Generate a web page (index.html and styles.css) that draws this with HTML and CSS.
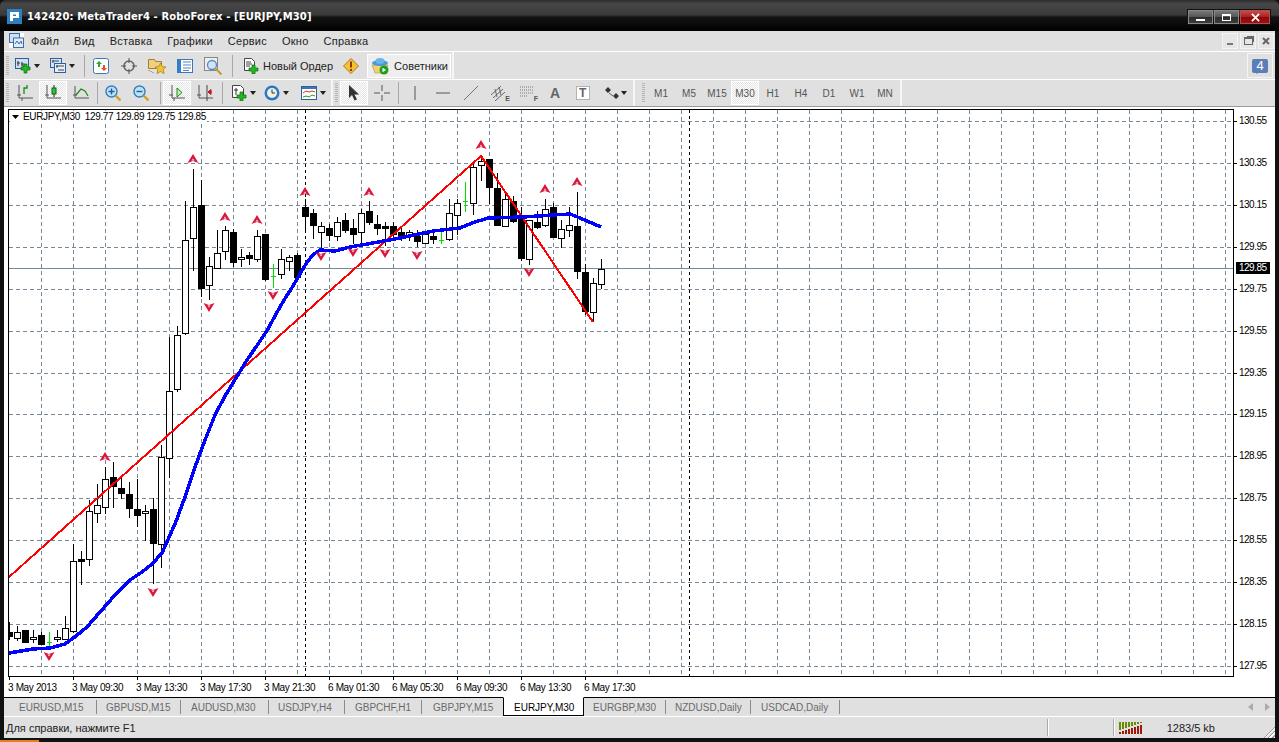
FILE: index.html
```html
<!DOCTYPE html>
<html lang="ru">
<head>
<meta charset="utf-8">
<title>MetaTrader4</title>
<link rel="stylesheet" href="styles.css">
</head>
<body>
<svg class="defs" width="0" height="0">
<defs>
<symbol id="i-chart" viewBox="0 0 16 16"><rect x=".5" y=".5" width="13" height="10" fill="#cfe0f5" stroke="#2b5f9e"/><path d="M3 3v5M2 5h3M7 4v4h4M6 6h3" stroke="#333" fill="none"/><path d="M9 6h3v3h3v3h-3v3H9v-3H6V9h3z" fill="#22b822" stroke="#0d6a0d" stroke-width=".7"/></symbol>
<symbol id="i-prof" viewBox="0 0 16 16"><rect x=".5" y=".5" width="11" height="9" fill="#d6e4f6" stroke="#2b5f9e"/><rect x="4.500" y="5.500" width="11" height="9" fill="#e6eefa" stroke="#2b5f9e"/><path d="M2 3h7M3 2v3M6 8h8M7 7v3M8 12h6" stroke="#444" fill="none"/></symbol>
<symbol id="i-watch" viewBox="0 0 16 16"><rect x=".5" y=".5" width="15" height="15" rx="2" fill="#fff" stroke="#3b78b8"/><path d="M5 9V6H3l3-3 3 3H7v3z" fill="#2aaa2a"/><path d="M10 7v3h2l-3 3-3-3h2V7z" fill="#e2502a" transform="translate(2 0)"/></symbol>
<symbol id="i-cross" viewBox="0 0 16 16"><circle cx="8" cy="8" r="5" fill="none" stroke="#666" stroke-width="1.600"/><path d="M8 0v5M8 11v5M0 8h5M11 8h5" stroke="#555"/></symbol>
<symbol id="i-star" viewBox="0 0 18 18"><path d="M.5 2.500h6l1 2h6v7H.5z" fill="#f0d080" stroke="#a08030"/><path d="M1 13v1M3 14v1M5 15v1" stroke="#777"/><path d="M12.500 6l1.700 3.600 3.800.4-2.800 2.600.8 4-3.500-2.100L9 16.600l.8-4L7 10l3.800-.4z" fill="#f2c530" stroke="#a07818" stroke-width=".7"/></symbol>
<symbol id="i-list" viewBox="0 0 16 16"><rect x=".5" y="1.500" width="15" height="13" fill="#fff" stroke="#3b78b8"/><rect x="1" y="2" width="3" height="12" fill="#2f80d0"/><path d="M6 4h8M6 7h8M6 10h8M6 12.500h6" stroke="#5585bb"/></symbol>
<symbol id="i-test" viewBox="0 0 18 18"><rect x=".5" y=".5" width="13" height="13" fill="#eee" stroke="#888"/><circle cx="8" cy="8" r="4.500" fill="#cfe4f8" stroke="#5b88b8" stroke-width="1.300"/><path d="M11.500 11.500l6 6" stroke="#c89a30" stroke-width="2"/></symbol>
<symbol id="i-order" viewBox="0 0 16 16"><path d="M1.500.5h7l3 3v9h-10z" fill="#fff" stroke="#444"/><path d="M3 4h5M3 6h6M3 8h4" stroke="#444"/><path d="M9 7h3v3h3v3h-3v3H9v-3H6v-3h3z" fill="#22b822" stroke="#0d6a0d" stroke-width=".7"/></symbol>
<symbol id="i-warn" viewBox="0 0 16 16"><path d="M8 .5l7.500 7.500L8 15.500.5 8z" fill="#f6c030" stroke="#a87a20"/><path d="M8 3.500v6M8 11v2" stroke="#8a3a10" stroke-width="2"/></symbol>
<symbol id="i-ea" viewBox="0 0 18 18"><path d="M1 8l3 8h10l3-8z" fill="#f0d070" stroke="#b09040" stroke-width=".6"/><ellipse cx="9" cy="6" rx="8" ry="3" fill="#4a9ad8"/><ellipse cx="9" cy="4" rx="4.500" ry="3" fill="#6ab4e8"/><circle cx="13" cy="13" r="4.500" fill="#1ea01e"/><path d="M11.500 10.800v4.400l3.600-2.200z" fill="#fff"/></symbol>
<symbol id="i-bar" viewBox="0 0 16 16"><path d="M2 0v13h14" fill="none" stroke="#555"/><path d="M0 10h4M5 16v-3" stroke="#555"/><path d="M7 9V3h3V0" fill="none" stroke="#1a8a1a" stroke-width="1.300"/></symbol>
<symbol id="i-cand" viewBox="0 0 16 16"><path d="M2 0v13h14" fill="none" stroke="#555"/><path d="M0 10h4" stroke="#555"/><path d="M9 0v12" stroke="#222"/><rect x="7" y="3" width="4" height="6" fill="#2fc82f" stroke="#126012"/></symbol>
<symbol id="i-line" viewBox="0 0 16 16"><path d="M2 1v12h14" fill="none" stroke="#555"/><path d="M0 10h4" stroke="#555"/><path d="M3 10l5-6 4 2 3 5" fill="none" stroke="#1a8a1a" stroke-width="1.200"/></symbol>
<symbol id="i-zin" viewBox="0 0 16 16"><circle cx="6.500" cy="6.500" r="5.500" fill="#bfe0f6" stroke="#2f80c0" stroke-width="1.400"/><path d="M3.500 6.500h6M6.500 3.500v6" stroke="#2060a0" stroke-width="1.400"/><path d="M10.500 10.500l5 5" stroke="#d0a030" stroke-width="2.400"/></symbol>
<symbol id="i-zout" viewBox="0 0 16 16"><circle cx="6.500" cy="6.500" r="5.500" fill="#bfe0f6" stroke="#2f80c0" stroke-width="1.400"/><path d="M3.500 6.500h6" stroke="#2060a0" stroke-width="1.400"/><path d="M10.500 10.500l5 5" stroke="#d0a030" stroke-width="2.400"/></symbol>
<symbol id="i-auto" viewBox="0 0 16 16"><path d="M3 0v13h13" fill="none" stroke="#555"/><path d="M0 10h4M5 16v-3" stroke="#555"/><path d="M8 3l5 4.500-5 4.500z" fill="#bff0b8" stroke="#1a8a1a"/></symbol>
<symbol id="i-shift" viewBox="0 0 16 16"><path d="M2 0v13h14" fill="none" stroke="#555"/><path d="M0 10h4" stroke="#555"/><path d="M10 0v16" stroke="#444"/><path d="M15 7H11M11 7l3-2.500v5z" fill="#c01818" stroke="#c01818"/></symbol>
<symbol id="i-ind" viewBox="0 0 16 16"><path d="M1.500.5h8l3 3v9h-11z" fill="#fff" stroke="#444"/><path d="M5 3v7M3 5h4" stroke="#333"/><path d="M9 7h3v3h3v3h-3v3H9v-3H6v-3h3z" fill="#22b822" stroke="#0d6a0d" stroke-width=".7"/></symbol>
<symbol id="i-clock" viewBox="0 0 16 16"><circle cx="8" cy="8" r="7.500" fill="#2a78c8"/><circle cx="8" cy="8" r="5" fill="#f4f0e0"/><path d="M8 4.500V8h3" fill="none" stroke="#333"/></symbol>
<symbol id="i-tmpl" viewBox="0 0 16 16"><rect x=".5" y="1.500" width="15" height="13" fill="#fff" stroke="#2b5f9e"/><rect x="1" y="2" width="14" height="2" fill="#3b78b8"/><path d="M2 8l3-2 3 1 3-1 3 1" fill="none" stroke="#d03a20"/><path d="M2 12l3-1 3 1 3-2 3 1" fill="none" stroke="#2a9a2a"/></symbol>
<symbol id="i-arrow" viewBox="0 0 16 16"><path d="M3 0v13l3-3 2.500 5.500 2.500-1L8.500 9.500H13z" fill="#333"/></symbol>
<symbol id="i-hair" viewBox="0 0 16 16"><path d="M8 0v6M8 10v6M0 8h6M10 8h6" stroke="#555"/></symbol>
<symbol id="i-vl" viewBox="0 0 16 16"><path d="M8 1v14" stroke="#555"/></symbol>
<symbol id="i-hl" viewBox="0 0 16 16"><path d="M1 8h14" stroke="#555"/></symbol>
<symbol id="i-tl" viewBox="0 0 16 16"><path d="M1 15L15 1" stroke="#777"/></symbol>
<symbol id="i-chan" viewBox="0 0 16 16"><path d="M0 10L10 1M2 13L12 4M4 16L14 7M4 4l2 8M8 2l2 8" stroke="#666" fill="none"/></symbol>
<symbol id="i-fib" viewBox="0 0 16 16"><path d="M1 2h13M1 5h13M1 8h13M1 11h8" stroke="#777" stroke-dasharray="1 1"/></symbol>
<symbol id="i-lab" viewBox="0 0 16 16"><rect x="1.500" y="1.500" width="13" height="13" fill="#fff" stroke="#777" stroke-dasharray="1 1"/></symbol>
<symbol id="i-more" viewBox="0 0 16 16"><path d="M1 5l3-3 3 3-3 3zM9 11l3-3 3 3-3 3z" fill="#333"/><path d="M5 8l4 3" stroke="#555"/></symbol>
<symbol id="i-logo" viewBox="0 0 15 15"><rect width="15" height="15" fill="#2f7fc0"/><path d="M3 3h9v6H6v3H3zM6 5.500v1.500h3V5.500z" fill="#fff"/></symbol>
<symbol id="i-doc" viewBox="0 0 15 15"><rect x=".5" y=".5" width="10" height="9" fill="#cfe0f5" stroke="#3b6ea8"/><rect x="4.500" y="5" width="10" height="9.500" fill="#e3edf9" stroke="#3b6ea8"/><path d="M6 11l2-3 2 3 2-3 1 3" fill="none" stroke="#3b6ea8"/></symbol>
</defs>
</svg>

<div class="window">
  <header class="titlebar">
    <svg class="logo"><use href="#i-logo"/></svg>
    <span class="title">142420: MetaTrader4 - RoboForex - [EURJPY,M30]</span>
    <div class="winbtns">
      <span class="wb"><i class="wb-min"></i></span>
      <span class="wb"><i class="wb-max"></i></span>
      <span class="wb wb-close"><svg class="wb-x" viewBox="0 0 10 10"><path d="M1 1l8 8M9 1l-8 8"/></svg></span>
    </div>
  </header>

  <div class="frame">
    <nav class="menu">
      <svg class="docicon"><use href="#i-doc"/></svg>
      <span class="mi">Файл</span><span class="mi">Вид</span><span class="mi">Вставка</span><span class="mi">Графики</span><span class="mi">Сервис</span><span class="mi">Окно</span><span class="mi">Справка</span>
      <div class="mdi">
        <span class="mdib"><i class="mdi-min"></i></span>
        <span class="mdib"><i class="mdi-max"></i></span>
        <span class="mdib"><svg class="mdi-x" viewBox="0 0 8 8"><path d="M1 1l6 6M7 1L1 7"/></svg></span>
      </div>
    </nav>

    <div class="tb tb1">
      <i class="grip"></i>
      <span class="btn drop"><svg class="ic"><use href="#i-chart"/></svg><i class="caret"></i></span>
      <span class="btn drop"><svg class="ic"><use href="#i-prof"/></svg><i class="caret"></i></span>
      <i class="sep sep3"></i>
      <span class="btn"><svg class="ic"><use href="#i-watch"/></svg></span>
      <span class="btn"><svg class="ic"><use href="#i-cross"/></svg></span>
      <span class="btn"><svg class="ic ic18"><use href="#i-star"/></svg></span>
      <span class="btn"><svg class="ic"><use href="#i-list"/></svg></span>
      <span class="btn"><svg class="ic ic18"><use href="#i-test"/></svg></span>
      <i class="sep sep5"></i>
      <span class="btn txt order"><svg class="ic"><use href="#i-order"/></svg>Новый Ордер</span>
      <span class="btn warn"><svg class="ic"><use href="#i-warn"/></svg></span>
      <span class="btn txt pressed ea"><svg class="ic ic18"><use href="#i-ea"/></svg>Советники</span>
      <i class="edge"></i>
      <span class="alert"><span class="bubble">4</span></span>
    </div>

    <div class="tb tb2">
      <i class="grip"></i>
      <span class="btn"><svg class="ic"><use href="#i-bar"/></svg></span>
      <span class="btn pressed"><svg class="ic"><use href="#i-cand"/></svg></span>
      <span class="btn"><svg class="ic"><use href="#i-line"/></svg></span>
      <i class="sep"></i>
      <span class="btn"><svg class="ic"><use href="#i-zin"/></svg></span>
      <span class="btn"><svg class="ic"><use href="#i-zout"/></svg></span>
      <i class="sep sep5"></i>
      <span class="btn pressed"><svg class="ic"><use href="#i-auto"/></svg></span>
      <span class="btn"><svg class="ic"><use href="#i-shift"/></svg></span>
      <i class="sep sep3"></i>
      <span class="btn drop drop6"><svg class="ic"><use href="#i-ind"/></svg><i class="caret"></i></span>
      <span class="btn drop"><svg class="ic"><use href="#i-clock"/></svg><i class="caret"></i></span>
      <span class="btn drop drop6"><svg class="ic"><use href="#i-tmpl"/></svg><i class="caret"></i></span>
      <i class="edge"></i>
      <i class="grip grip-b"></i>
      <span class="btn pressed"><svg class="ic"><use href="#i-arrow"/></svg></span>
      <span class="btn"><svg class="ic"><use href="#i-hair"/></svg></span>
      <i class="sep sep2"></i>
      <span class="btn"><svg class="ic"><use href="#i-vl"/></svg></span>
      <span class="btn"><svg class="ic"><use href="#i-hl"/></svg></span>
      <span class="btn"><svg class="ic"><use href="#i-tl"/></svg></span>
      <span class="btn lab"><svg class="ic"><use href="#i-chan"/></svg><b class="sub">E</b></span>
      <span class="btn lab"><svg class="ic"><use href="#i-fib"/></svg><b class="sub">F</b></span>
      <span class="btn big">A</span>
      <span class="btn lab"><svg class="ic"><use href="#i-lab"/></svg><b class="tee">T</b></span>
      <span class="btn drop drop7"><svg class="ic"><use href="#i-more"/></svg><i class="caret"></i></span>
      <i class="edge"></i>
      <i class="grip grip-c"></i>
      <span class="btn tf">M1</span><span class="btn tf">M5</span><span class="btn tf">M15</span><span class="btn tf pressed">M30</span><span class="btn tf">H1</span><span class="btn tf">H4</span><span class="btn tf">D1</span><span class="btn tf">W1</span><span class="btn tf">MN</span>
      <i class="edge"></i>
    </div>

    <main class="chart">
      <svg class="plot" viewBox="4 107 1271 590" width="1271" height="590">
        <defs>
          <path id="up" d="M0 -5L5.500 4 0 2 -5.500 4ZM0 -.5L-1.500 2 0 1.300 1.500 2Z"/>
          <path id="dn" d="M0 5L5.500 -4 0 -2 -5.500 -4ZM0 .5L-1.500 -2 0 -1.300 1.500 -2Z"/>
        </defs>
        <path class="grid" d="M9 121.500H1233M9 163.500H1233M9 205.500H1233M9 247.500H1233M9 289.500H1233M9 331.500H1233M9 373.500H1233M9 414.500H1233M9 456.500H1233M9 498.500H1233M9 540.500H1233M9 582.500H1233M9 624.500H1233M9 666.500H1233"/>
        <path class="grid" d="M41.500 110V676M73.500 110V676M105.500 110V676M137.500 110V676M169.500 110V676M201.500 110V676M233.500 110V676M265.500 110V676M297.500 110V676M329.500 110V676M361.500 110V676M393.500 110V676M425.500 110V676M457.500 110V676M489.500 110V676M521.500 110V676M553.500 110V676M585.500 110V676M617.500 110V676M649.500 110V676M681.500 110V676M713.500 110V676M745.500 110V676M777.500 110V676M809.500 110V676M841.500 110V676M873.500 110V676M905.500 110V676M937.500 110V676M969.500 110V676M1001.500 110V676M1033.500 110V676M1065.500 110V676M1097.500 110V676M1129.500 110V676M1161.500 110V676M1193.500 110V676M1225.500 110V676"/>
        <path class="period" d="M305.500 110V676M689.500 110V676"/>
        <path class="bid" d="M9 268.500H1233"/>

        <path class="wick" d="M9.500 622V640M17.500 626V641M25.500 630V642M33.500 630V643M41.500 632V644M57.500 630V642M65.500 616V640M73.500 544V633M81.500 551V585M89.500 500V566M97.500 484V523M105.500 467V514M113.500 462V508M121.500 477V499M129.500 482V518M137.500 479V527M145.500 505V541M153.500 498V584M161.500 445V568M169.500 337V478M177.500 326V392M185.500 201V335M193.500 169V271M201.500 180V297M209.500 257V300M217.500 230V268M225.500 226V260M233.500 229V267M241.500 249V267M249.500 252V265M257.500 230V262M265.500 234V281M281.500 249V279M289.500 255V271M297.500 253V277M305.500 199V233M313.500 209V239M321.500 222V250M329.500 224V241M337.500 217V241M345.500 213V233M353.500 219V244M361.500 209V243M369.500 201V225M377.500 215V235M385.500 222V246M393.500 222V240M401.500 228V241M409.500 230V241M417.500 230V247M425.500 232V244M433.500 232V244M449.500 199V241M457.500 199V235M473.500 163V215M481.500 156V181M489.500 159V204M497.500 173V225M505.500 194V226M513.500 196V223M521.500 207V261M529.500 220V265M537.500 211V229M545.500 199V227M553.500 203V238M561.500 220V248M569.500 207V237M577.500 192V279M585.500 264V315M593.500 278V322M601.500 259V289"/>
        <path class="doji" d="M49.500 632V648M47 642.500H52M273.500 264V288M271 276.500H276M441.500 231V244M439 240.500H444M465.500 182V212M463 201.500H468"/>
        <path class="bull" d="M14.500 632.500h6v6h-6zM30.500 637.500h6v2h-6zM54.500 637.500h6v2h-6zM62.500 628.500h6v11h-6zM70.500 561.500h6v70h-6zM86.500 511.500h6v48h-6zM94.500 505.500h6v8h-6zM102.500 479.500h6v28h-6zM142.500 511.500h6v2h-6zM158.500 457.500h6v87h-6zM166.500 391.500h6v67h-6zM174.500 335.500h6v54h-6zM182.500 240.500h6v93h-6zM190.500 207.500h6v31h-6zM206.500 266.500h6v19h-6zM214.500 253.500h6v15h-6zM222.500 230.500h6v21h-6zM238.500 257.500h6v2h-6zM254.500 236.500h6v23h-6zM278.500 259.500h6v15h-6zM286.500 257.500h6v4h-6zM318.500 226.500h6v6h-6zM334.500 222.500h6v14h-6zM358.500 213.500h6v19h-6zM406.500 232.500h6v4h-6zM422.500 234.500h6v9h-6zM446.500 213.500h6v26h-6zM454.500 203.500h6v12h-6zM470.500 167.500h6v36h-6zM478.500 161.500h6v4h-6zM502.500 199.500h6v27h-6zM526.500 220.500h6v39h-6zM542.500 209.500h6v16h-6zM558.500 229.500h6v9h-6zM566.500 225.500h6v5h-6zM590.500 283.500h6v29h-6zM598.500 269.500h6v15h-6z"/>
        <path class="bear" d="M9.500 632.500h3v4h-3zM22.500 630.500h6v12h-6zM38.500 635.500h6v9h-6zM78.500 559.500h6v2h-6zM110.500 477.500h6v9h-6zM118.500 488.500h6v5h-6zM126.500 494.500h6v14h-6zM134.500 509.500h6v6h-6zM150.500 509.500h6v34h-6zM198.500 205.500h6v83h-6zM230.500 232.500h6v30h-6zM246.500 255.500h6v3h-6zM262.500 234.500h6v45h-6zM294.500 255.500h6v22h-6zM302.500 207.500h6v9h-6zM310.500 213.500h6v12h-6zM326.500 228.500h6v7h-6zM342.500 220.500h6v10h-6zM350.500 228.500h6v6h-6zM366.500 211.500h6v11h-6zM374.500 224.500h6v4h-6zM382.500 226.500h6v2h-6zM390.500 226.500h6v8h-6zM398.500 232.500h6v3h-6zM414.500 236.500h6v5h-6zM430.500 236.500h6v3h-6zM486.500 159.500h6v28h-6zM494.500 188.500h6v37h-6zM510.500 201.500h6v20h-6zM518.500 219.500h6v39h-6zM534.500 222.500h6v5h-6zM550.500 207.500h6v30h-6zM574.500 226.500h6v45h-6zM582.500 272.500h6v39h-6z"/>

        <polyline class="zigzag" points="9,577 481,156 593,322"/>
        <polyline class="ma" points="9,653 33,649 50,648 65,644 76,636 87,627 100,612 115,595 130,580 142,572 152,564 162,553 170,535 175,524 185,497 195,467 205,440 215,415 225,396 236,378 247,360 258,344 268,329 276,314 284,300 293,286 300,274 307,262 314,254 320,250 335,251 350,247 373,243 400,238 433,231 460,228 472,223 488,218 523,217 553,215 570,214 580,218 601,227"/>

        <g class="mark">
          <use href="#up" x="193" y="159"/><use href="#up" x="225" y="217"/><use href="#up" x="257" y="220"/><use href="#up" x="305" y="192"/><use href="#up" x="369" y="192"/><use href="#up" x="481" y="145"/><use href="#up" x="545" y="189"/><use href="#up" x="577" y="182"/><use href="#up" x="105" y="457"/>
          <use href="#dn" x="209" y="307"/><use href="#dn" x="273" y="295"/><use href="#dn" x="321" y="256"/><use href="#dn" x="353" y="252"/><use href="#dn" x="385" y="253"/><use href="#dn" x="417" y="255"/><use href="#dn" x="529" y="272"/><use href="#dn" x="153" y="592"/><use href="#dn" x="49" y="656"/>
        </g>

        <rect class="axis" x="8.500" y="109.500" width="1225" height="567"/>
        <path class="tick" d="M1234 121.500h3M1234 163.500h3M1234 205.500h3M1234 247.500h3M1234 289.500h3M1234 331.500h3M1234 373.500h3M1234 414.500h3M1234 456.500h3M1234 498.500h3M1234 540.500h3M1234 582.500h3M1234 624.500h3M1234 666.500h3M9.500 677v3M73.500 677v3M137.500 677v3M201.500 677v3M265.500 677v3M329.500 677v3M393.500 677v3M457.500 677v3M521.500 677v3M585.500 677v3"/>

        <rect class="legend-bg" x="10" y="111" width="197" height="13"/>
        <path class="legend-arrow" d="M12 115h7l-3.500 4z"/>
        <text class="t" x="23" y="120">EURJPY,M30  129.77 129.89 129.75 129.85</text>

        <g class="prices">
        <text class="t" x="1239" y="124">130.55</text><text class="t" x="1239" y="166">130.35</text><text class="t" x="1239" y="208">130.15</text><text class="t" x="1239" y="250">129.95</text><text class="t" x="1239" y="292">129.75</text><text class="t" x="1239" y="334">129.55</text><text class="t" x="1239" y="376">129.35</text><text class="t" x="1239" y="417">129.15</text><text class="t" x="1239" y="459">128.95</text><text class="t" x="1239" y="501">128.75</text><text class="t" x="1239" y="543">128.55</text><text class="t" x="1239" y="585">128.35</text><text class="t" x="1239" y="627">128.15</text><text class="t" x="1239" y="669">127.95</text>
        <rect class="bidbox" x="1236" y="262" width="34" height="12"/>
        <text class="t t-w" x="1239" y="271">129.85</text>
        </g>

        <text class="t" x="8" y="691">3 May 2013</text><text class="t" x="72" y="691">3 May 09:30</text><text class="t" x="136" y="691">3 May 13:30</text><text class="t" x="200" y="691">3 May 17:30</text><text class="t" x="264" y="691">3 May 21:30</text><text class="t" x="328" y="691">6 May 01:30</text><text class="t" x="392" y="691">6 May 05:30</text><text class="t" x="456" y="691">6 May 09:30</text><text class="t" x="520" y="691">6 May 13:30</text><text class="t" x="584" y="691">6 May 17:30</text>
      </svg>
    </main>

    <div class="tabs">
      <span class="tab">EURUSD,M15</span><span class="tab">GBPUSD,M15</span><span class="tab">AUDUSD,M30</span><span class="tab">USDJPY,H4</span><span class="tab">GBPCHF,H1</span><span class="tab noline">GBPJPY,M15</span><span class="tab active">EURJPY,M30</span><span class="tab">EURGBP,M30</span><span class="tab">NZDUSD,Daily</span><span class="tab">USDCAD,Daily</span>
      <span class="tabnav"><i class="tri-l"></i><i class="tri-r"></i></span>
    </div>

    <footer class="status">
      <span class="help">Для справки, нажмите F1</span>
      <i class="stsep s1"></i>
      <i class="stsep s2"></i>
      <svg class="conn" viewBox="0 0 24 12" width="24" height="12"><path class="conn-g" d="M0 0h2v8H0zM3 0h2v7H3zM6 0h2v6H6zM9 0h2v5H9zM12 0h2v4h-2zM15 0h2v3h-2zM18 0h2v2h-2zM21 0h2v1h-2z"/><path class="conn-r" d="M0 10h2v2H0zM3 9h2v3H3zM6 8h2v4H6zM9 7h2v5H9zM12 6h2v6h-2zM15 5h2v7h-2zM18 4h2v8h-2zM21 3h2v9h-2z"/></svg>
      <span class="kb">1283/5 kb</span>
      <i class="sizegrip"></i>
    </footer>
  </div>
  <div class="bottom"><i class="taskbar"></i></div>
</div>
</body>
</html>
```
FILE: styles.css
```css
* { box-sizing: border-box; }
html, body { margin: 0; padding: 0; }
body { width: 1279px; height: 742px; overflow: hidden; background: #111; font-family: "Liberation Sans", Arial, sans-serif; font-size: 11px; color: #222; }
i { display: block; font-style: normal; }
.defs { position: absolute; }
.window { display: flex; flex-direction: column; height: 742px; }

.titlebar { height: 31px; display: flex; align-items: flex-start; padding: 9px 9px 0 7px; background: linear-gradient(#2c2c2c 0, #474747 4px, #3a3a3a 15px, #141414 17px, #000 31px); border-radius: 6px 6px 0 0; }
.logo { width: 15px; height: 15px; flex: none; }
.title { margin-left: 5px; font-family: "DejaVu Sans", sans-serif; font-weight: bold; font-size: 10px; line-height: 15px; color: #fff; letter-spacing: .12px; white-space: nowrap; }
.winbtns { margin-left: auto; display: flex; gap: 1px; height: 14px; margin-top: 1px; outline: 1px solid #111; }
.wb { width: 25px; height: 14px; display: flex; align-items: center; justify-content: center; background: linear-gradient(#777 0, #555 50%, #2c2c2c 50%, #3c3c3c); border: 1px solid #888; }
.wb-close { width: 30px; background: linear-gradient(#c84a4a 0, #a82020 50%, #8a0808 50%, #a01010); border-color: #b05050; }
.wb-min { width: 9px; height: 2px; margin-top: 6px; background: #fff; }
.wb-max { width: 9px; height: 7px; border: 1px solid #fff; border-top-width: 2px; }
.wb-x { width: 9px; height: 9px; fill: none; stroke: #fff; stroke-width: 2; }

.frame { flex: 1; display: flex; flex-direction: column; margin: 0 4px 0 4px; background: #e0e0e0; min-height: 0; }

.menu { height: 20px; flex: none; display: flex; align-items: center; gap: 15px; padding-left: 27px; position: relative; font-size: 11px; color: #222; }
.docicon { width: 15px; height: 15px; position: absolute; left: 5px; top: 2px; background: #fff; }
.mi { letter-spacing: .25px; white-space: nowrap; }
.mdi { margin-left: auto; display: flex; gap: 2px; margin-right: 1px; }
.mdib { width: 16px; height: 16px; display: flex; align-items: center; justify-content: center; background: #e6e6e6; border: 1px solid #f4f4f4; }
.mdi-min { width: 6px; height: 2px; margin-top: 6px; background: #777; }
.mdi-max { width: 9px; height: 8px; border: 1px solid #666; border-top-width: 2px; box-shadow: 2px -2px 0 -1px #666; }
.mdi-x { width: 8px; height: 8px; fill: none; stroke: #666; stroke-width: 2; }

.tb { display: flex; align-items: center; flex: none; padding-left: 2px; border-top: 1px solid #fff; }
.tb1 { height: 28px; }
.tb2 { height: 28px; border-bottom: 1px solid #9a9a9a; }
.grip { width: 5px; height: 20px; background: repeating-linear-gradient(#b4b4b4 0 1px, transparent 1px 2px) 0 0 / 3px 100% no-repeat; flex: none; }
.grip-b { margin-left: 2px; }
.grip-c { margin-left: 7px; }
.sep { width: 1px; height: 22px; margin: 0 1px 0 2px; background: #a8a8a8; flex: none; }
.sep2 { margin-right: 2px; }
.sep5 { margin-left: 5px; margin-right: 2px; }
.sep3 { margin-left: 3px; margin-right: 2px; }
.edge { width: 2px; height: 100%; margin-left: 1px; background: #f6f6f6; flex: none; }

.btn { width: 28px; height: 24px; flex: none; display: flex; align-items: center; justify-content: center; position: relative; font-size: 11px; color: #555; }
.ic { width: 16px; height: 16px; flex: none; overflow: visible; }
.ic18 { width: 18px; height: 18px; }
.drop { width: 35px; justify-content: flex-start; padding-left: 4px; }
.drop6 { padding-left: 6px; }
.drop7 { padding-left: 7px; }
.drop7 .caret { margin-left: 1px; }
.caret { width: 0; height: 0; margin-left: 3px; border: 3px solid transparent; border-top: 4px solid #222; border-bottom: 0; }
.pressed { border: 1px solid #fff; background: repeating-conic-gradient(#fff 0 25%, #e4e4e4 0 50%) 0 0 / 2px 2px; }
.txt { width: auto; color: #222; gap: 4px; white-space: nowrap; }
.order { padding: 0 7px 0 8px; }
.warn { width: 22px; }
.ea { margin-left: 5px; padding: 0 2px 0 3px; background: #eee; gap: 5px; }
.alert { margin-left: auto; margin-right: 2px; width: 26px; height: 25px; display: flex; align-items: center; justify-content: center; border: 1px solid #f4f4f4; }
.bubble { width: 16px; height: 14px; position: relative; background: #5a7fb8; border-radius: 2px; color: #fff; font-size: 13px; line-height: 14px; text-align: center; }
.bubble::after { content: ""; position: absolute; left: 3px; bottom: -3px; border: 2px solid transparent; border-top: 2px solid #5a7fb8; }
.sub { position: absolute; right: 3px; bottom: 3px; font-size: 7px; line-height: 7px; color: #555; }
.tee { position: absolute; left: 10px; top: 5px; font-size: 12px; line-height: 14px; color: #666; }
.big { font-size: 14px; font-weight: bold; color: #666; }
.tf { font-size: 10px; color: #555; }

.chart { flex: 1; min-height: 0; background: #fff; border-top: 1px solid #fff; overflow: hidden; }
.plot { display: block; margin-top: -1px; }
.grid { stroke: #778899; stroke-width: 1; stroke-dasharray: 4 3; fill: none; shape-rendering: crispEdges; }
.period { stroke: #000; stroke-width: 1; stroke-dasharray: 3 3; fill: none; shape-rendering: crispEdges; }
.bid { stroke: #778899; stroke-width: 1; shape-rendering: crispEdges; }
.wick { stroke: #000; stroke-width: 1; fill: none; shape-rendering: crispEdges; }
.doji { stroke: #00e000; stroke-width: 1; fill: none; shape-rendering: crispEdges; }
.bull { fill: #fff; stroke: #000; stroke-width: 1; shape-rendering: crispEdges; }
.bear { fill: #000; stroke: #000; stroke-width: 1; shape-rendering: crispEdges; }
.zigzag { fill: none; stroke: #f00; stroke-width: 2; shape-rendering: crispEdges; }
.ma { fill: none; stroke: #00f; stroke-width: 3.500; stroke-linejoin: round; shape-rendering: crispEdges; }
.mark { fill: #dc143c; fill-rule: evenodd; }
.axis { fill: none; stroke: #000; stroke-width: 1; shape-rendering: crispEdges; }
.tick { stroke: #000; stroke-width: 1; shape-rendering: crispEdges; }
.legend-arrow { fill: #000; }
.legend-bg { fill: #fff; }
.t { font-family: "Liberation Sans", Arial, sans-serif; font-size: 10px; letter-spacing: -.35px; fill: #000; white-space: pre; }
.prices .t { letter-spacing: -.5px; }
.prices .t-w { fill: #fff; }
.bidbox { fill: #000; }

.tabs { height: 20px; flex: none; display: flex; align-items: stretch; border-top: 1px solid #000; border-bottom: 1px solid #fff; padding-left: 2px; background: #e0e0e0; font-size: 10px; color: #6a6a6a; position: relative; }
.tab { display: flex; align-items: center; flex: none; padding-left: 10px; margin: 2px 0; border-right: 1px solid #8a8a8a; white-space: nowrap; }
.tab:nth-child(1) { width: 91px; padding-left: 13px; }
.tab:nth-child(2) { width: 84px; padding-left: 9px; }
.tab:nth-child(3) { width: 88px; }
.tab:nth-child(4) { width: 76px; padding-left: 9px; }
.tab:nth-child(5) { width: 77px; }
.tab:nth-child(6) { width: 81px; padding-left: 11px; }
.tab:nth-child(8) { width: 82px; padding-left: 9px; }
.tab:nth-child(9) { width: 85px; padding-left: 9px; }
.tab:nth-child(10) { width: 89px; }
.noline { border-right-color: transparent; }
.tab.active { width: 81px; margin: -1px 0 0; background: #fff; color: #000; padding: 1px 0 0 10px; border: 1px solid #000; border-top-color: #fff; }
.tabnav { margin-left: auto; margin-right: 5px; display: flex; align-items: center; gap: 12px; }
.tri-l { border: 4px solid transparent; border-right: 5px solid #aaa; border-left: 0; }
.tri-r { border: 4px solid transparent; border-left: 5px solid #aaa; border-right: 0; }

.status { height: 21px; flex: none; display: flex; align-items: center; position: relative; padding-left: 2px; font-size: 11px; color: #222; background: #e0e0e0; }
.help { white-space: nowrap; }
.stsep { width: 1px; height: 17px; background: #aaa; box-shadow: 1px 0 0 #fff; flex: none; position: absolute; top: 2px; }
.s1 { left: 1043px; }
.s2 { left: 1109px; }
.conn { position: absolute; left: 1115px; top: 5px; }
.conn-g { fill: #6a8a00; }
.conn-r { fill: #a01808; }
.kb { margin-left: auto; margin-right: 60px; white-space: nowrap; }
.sizegrip { position: absolute; right: 0; bottom: 0; width: 13px; height: 13px; background: repeating-linear-gradient(135deg, transparent 0 1px, #999 1px 2px, #fff 2px 3px); clip-path: polygon(100% 0, 100% 100%, 0 100%); }

.bottom { height: 4px; flex: none; background: #111; }
.taskbar { width: 39px; height: 2px; margin-top: 2px; background: #e08020; }
```
